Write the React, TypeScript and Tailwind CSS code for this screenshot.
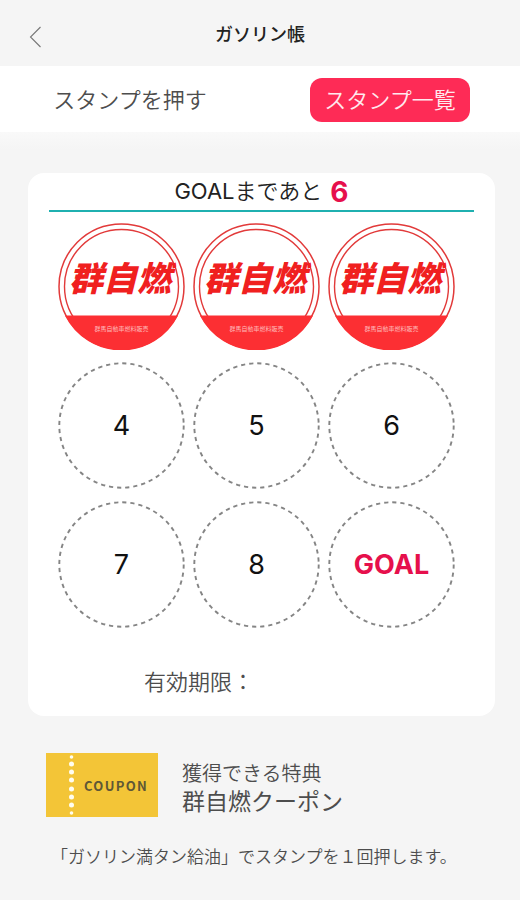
import { useState } from 'react';

const TOTAL = 9;
const COLLECTED = 3;

function BackIcon() {
  return (
    <svg width="14" height="22" viewBox="0 0 14 22" fill="none" aria-hidden="true">
      <path d="M12.5 1 L2.5 11 L12.5 21" stroke="#777" strokeWidth="1.1" />
    </svg>
  );
}

function StampMark() {
  return (
    <svg className="size-[127px]" viewBox="0 0 127 127" role="img" aria-label="群自燃">
      <circle cx="63.5" cy="63.5" r="62.5" fill="#fff" stroke="#e23a3a" strokeWidth="1.5" />
      <circle cx="63.5" cy="63.5" r="57" fill="none" stroke="#e23a3a" strokeWidth="1.4" />
      <path d="M6.9 92.5 A63.3 63.3 0 0 0 120.1 92.5 Z" fill="#fc2f33" />
      <text x="62" y="68" textAnchor="middle" className="fill-[#f0201f] text-[34px] font-black italic">
        群自燃
      </text>
      <text x="63.5" y="108" textAnchor="middle" className="fill-[#ffb9b9] text-[6px]">
        群馬自動車燃料販売
      </text>
    </svg>
  );
}

function EmptySlot({ label, goal }: { label: string; goal: boolean }) {
  return (
    <div className="grid size-[127px] place-items-center">
      <svg className="col-start-1 row-start-1 size-full" viewBox="0 0 127 127" aria-hidden="true">
        <circle
          cx="63.5"
          cy="63.5"
          r="62.2"
          fill="none"
          stroke="#858585"
          strokeWidth="1.9"
          strokeDasharray="4.2 3.95"
        />
      </svg>
      <span
        className={
          goal
            ? 'col-start-1 row-start-1 text-[27px] leading-8 font-bold text-[#e6104c]'
            : 'col-start-1 row-start-1 text-[27px] leading-8 text-[#111]'
        }
      >
        {label}
      </span>
    </div>
  );
}

function CouponImage() {
  return (
    <svg width="112" height="64" viewBox="0 0 112 64" role="img" aria-label="COUPON">
      <rect width="112" height="64" fill="#f3c537" />
      {[4, 11, 19, 27, 36, 44, 52, 60].map((y, i) => (
        <circle key={y} cx="25.5" cy={y} r={i === 0 || i === 7 ? 1.8 : 2.5} fill="#fffdf0" />
      ))}
      <text
        x="38"
        y="38"
        className="fill-[#5f5736] font-['Noto_Sans_CJK_JP',sans-serif] text-[13px] font-bold tracking-widest"
      >
        COUPON
      </text>
    </svg>
  );
}

export default function App() {
  const [view, setView] = useState<'press' | 'list'>('list');
  const slots = Array.from({ length: TOTAL }, (_, i) => i + 1);
  const active = 'bg-[#fe2b56] text-[#ffe9ee]';

  return (
    <div
      className="min-h-screen bg-[#f5f5f5] font-[Inter,'Noto_Sans_CJK_JP',sans-serif] text-[#4d4d4d]"
      lang="ja"
    >
      <header className="grid h-[66px] grid-cols-[1fr_auto_1fr] items-center px-7">
        <button type="button" aria-label="戻る" className="mt-2 w-fit">
          <BackIcon />
        </button>
        <h1 className="mt-1 text-[18px] leading-6 font-medium text-[#222]">ガソリン帳</h1>
      </header>

      <nav className="grid h-[66px] grid-cols-2 items-center bg-white pt-px">
        <button
          type="button"
          onClick={() => setView('press')}
          className={`h-11 justify-self-center rounded-xl px-[3px] text-[22px] leading-7 font-[350] ${view === 'press' ? active : ''}`}
        >
          スタンプを押す
        </button>
        <button
          type="button"
          onClick={() => setView('list')}
          className={`h-11 w-40 justify-self-center rounded-xl text-[22px] leading-7 font-[350] ${view === 'list' ? active : ''}`}
        >
          スタンプ一覧
        </button>
      </nav>

      <div className="h-[18px] bg-linear-to-b from-[#f9f9f9] to-[#f5f5f5]" />

      <main className="mt-[23px] pr-[25px] pl-7">
        <section className="rounded-2xl bg-white px-[21px] pb-[18px]">
          <h2 className="flex h-[39px] items-center justify-center border-b-2 border-[#1fb0b0] text-[22px] font-normal text-[#222]">
            <span>
              GOAL<span className="font-[350]">まであと</span>
            </span>
            <strong className="ml-2 text-[28px] font-bold text-[#e6104c]">6</strong>
          </h2>
          <div className="mt-[11px] grid grid-cols-[repeat(3,127px)] justify-center gap-x-2 gap-y-3 pr-2.5">
            {slots.map((n) =>
              n <= COLLECTED ? (
                <StampMark key={n} />
              ) : (
                <EmptySlot key={n} label={n === TOTAL ? 'GOAL' : String(n)} goal={n === TOTAL} />
              ),
            )}
          </div>
          <p className="mt-[38px] pl-[95px] text-[22px] leading-8 font-[350]">有効期限：</p>
        </section>

        <section className="mt-[37px] flex items-center gap-6 pl-[18px]">
          <CouponImage />
          <div className="pt-1.5 font-[350]">
            <p className="text-[20px] leading-7">獲得できる特典</p>
            <p className="text-[23px] leading-7 font-normal">群自燃クーポン</p>
          </div>
        </section>

        <p className="mt-7 pl-[23px] text-[17px] leading-6 font-[350] whitespace-nowrap">
          「ガソリン満タン給油」でスタンプを１回押します。
        </p>
      </main>
    </div>
  );
}
